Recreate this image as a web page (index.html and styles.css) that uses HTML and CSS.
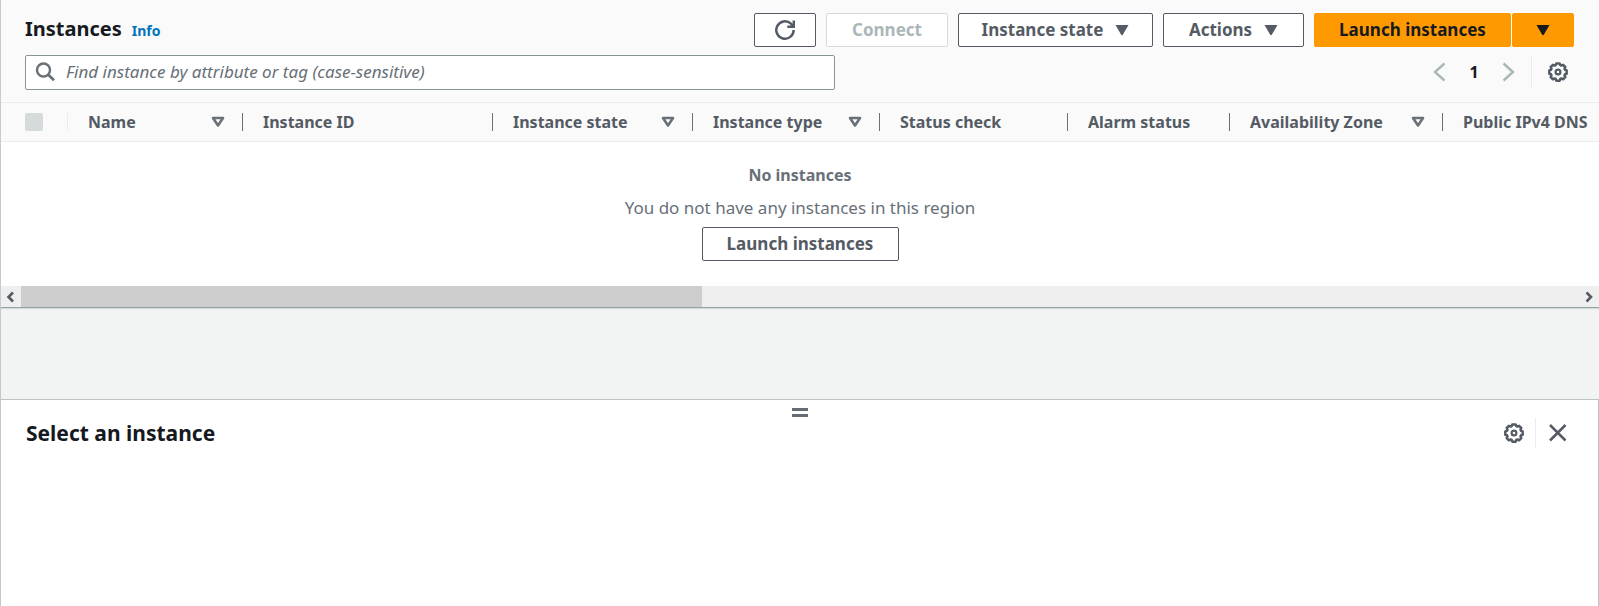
FILE: index.html
```html
<!DOCTYPE html>
<html lang="en">
<head>
<meta charset="utf-8">
<title>Instances</title>
<link rel="stylesheet" href="styles.css">
</head>
<body>
<svg class="sprite" aria-hidden="true">
  <symbol id="gear" viewBox="0 0 20 20">
    <path d="M8.300 1.400h3.400l.6 1.700 1.100.5 1.700-.8 2.200 2.200-.8 1.700.5 1.100 1.700.6v3.300l-1.700.6-.5 1.100.8 1.700-2.200 2.200-1.700-.8-1.100.5-.6 1.700H8.300l-.6-1.700-1.100-.5-1.700.8-2.200-2.200.8-1.700-.5-1.100-1.700-.6V8.400l1.700-.6.5-1.100-.8-1.700 2.200-2.200 1.700.8 1.100-.5z" stroke-width="2.500" stroke-linejoin="round"/>
    <circle cx="10" cy="10" r="2.400" stroke-width="2.200"/>
  </symbol>
  <symbol id="sort" viewBox="0 0 14 12"><path d="M2 2h10L7 9.500z" stroke-width="2.600" stroke-linejoin="round"/></symbol>
  <symbol id="caret" viewBox="0 0 14 12"><path class="fill" d="M.5 1h13L7.800 10.700q-.8.900-1.600 0z"/></symbol>
</svg>
<main class="page">
  <section class="instances">
    <header class="toolbar">
      <div class="row">
        <div class="heading">
          <h1>Instances</h1>
          <a class="info" href="#info">Info</a>
        </div>
        <div class="actions">
          <button class="btn icon-btn" type="button" aria-label="Refresh"><svg class="icon" viewBox="0 0 20 20"><path d="M18.700 10a8.700 8.700 0 1 1-2.800-6.400L18 6" stroke-width="2.500"/><path d="M18.800.5v6.300h-6.500" stroke-width="2.500"/></svg></button>
          <button class="btn connect" type="button" disabled>Connect</button>
          <button class="btn state" type="button">Instance state <svg class="caret"><use href="#caret"/></svg></button>
          <button class="btn menu" type="button">Actions <svg class="caret"><use href="#caret"/></svg></button>
          <div class="split">
            <button class="btn primary launch" type="button">Launch instances</button>
            <button class="btn primary icon-btn" type="button" aria-label="More launch options"><svg class="caret"><use href="#caret"/></svg></button>
          </div>
        </div>
      </div>
      <div class="row">
        <label class="search">
          <svg class="icon" viewBox="0 0 20 20"><circle cx="8.500" cy="8" r="6.500" stroke-width="2.400"/><path d="M13 12.500l6 5.700" stroke-width="2.800"/></svg>
          <input type="text" aria-label="Find instance" placeholder="Find instance by attribute or tag (case-sensitive)">
        </label>
        <div class="pager">
          <button class="plain" type="button" aria-label="Previous page" disabled><svg class="icon" viewBox="0 0 20 20"><path d="M14.500 1.500L5 10l9.500 8.500" stroke-width="2.400"/></svg></button>
          <span class="current">1</span>
          <button class="plain" type="button" aria-label="Next page" disabled><svg class="icon" viewBox="0 0 20 20"><path d="M5.500 1.500L15 10l-9.500 8.500" stroke-width="2.400"/></svg></button>
          <button class="plain settings" type="button" aria-label="Preferences"><svg class="icon"><use href="#gear"/></svg></button>
        </div>
      </div>
    </header>
    <div class="table-wrap">
      <table>
        <colgroup><col class="c-check"><col class="c-name"><col class="c-id"><col class="c-state"><col class="c-type"><col class="c-status"><col class="c-alarm"><col class="c-zone"><col></colgroup>
        <thead>
          <tr>
            <th class="check"><div class="cell"><input type="checkbox" aria-label="Select all" disabled></div></th>
            <th><div class="cell">Name <svg class="sort"><use href="#sort"/></svg></div></th>
            <th><div class="cell">Instance ID</div></th>
            <th><div class="cell">Instance state <svg class="sort"><use href="#sort"/></svg></div></th>
            <th><div class="cell">Instance type <svg class="sort"><use href="#sort"/></svg></div></th>
            <th><div class="cell">Status check</div></th>
            <th><div class="cell">Alarm status</div></th>
            <th><div class="cell">Availability Zone <svg class="sort"><use href="#sort"/></svg></div></th>
            <th><div class="cell">Public IPv4 DNS</div></th>
          </tr>
        </thead>
        <tbody>
          <tr>
            <td colspan="9">
              <div class="empty">
                <strong>No instances</strong>
                <p>You do not have any instances in this region</p>
                <button class="btn launch" type="button">Launch instances</button>
              </div>
            </td>
          </tr>
        </tbody>
      </table>
    </div>
    <div class="scrollbar">
      <button class="plain step" type="button" aria-label="Scroll left"><svg viewBox="0 0 10 12"><path d="M7 1.500L2.500 6 7 10.500" stroke-width="2.600"/></svg></button>
      <div class="track"><div class="thumb"></div></div>
      <button class="plain step" type="button" aria-label="Scroll right"><svg viewBox="0 0 10 12"><path d="M2.500 1.500L7 6l-4.500 4.500" stroke-width="2.600"/></svg></button>
    </div>
  </section>
  <section class="details">
    <div class="handle"><span></span></div>
    <div class="details-head">
      <h2>Select an instance</h2>
      <div class="tools">
        <button class="plain" type="button" aria-label="Panel preferences"><svg class="icon"><use href="#gear"/></svg></button>
        <button class="plain close" type="button" aria-label="Close panel"><svg class="icon" viewBox="0 0 20 20"><path d="M2 2l15.500 15.500M17.500 2L2 17.500" stroke-width="2.500"/></svg></button>
      </div>
    </div>
  </section>
</main>
</body>
</html>
```
FILE: styles.css
```css
* { box-sizing: border-box; }
body {
  margin: 0;
  background: #f2f4f4;
  color: #16191f;
  font: 16px/22px "Noto Sans", "Open Sans", sans-serif;
}
h1, h2, p { margin: 0; }
button, input { font: inherit; }
svg { fill: none; stroke: currentColor; flex: none; display: block; }
.sprite { display: none; }
.fill { fill: currentColor; stroke: none; }
.icon { width: 20px; height: 20px; }
.caret, .sort { width: 14px; height: 12px; }
.page { min-height: 100vh; display: flex; flex-direction: column; border-left: 1px solid #c0c9cf; }

.instances { background: #fff; border-bottom: 1px solid #95a1a5; box-shadow: 0 1px 1px #d5dbdb; margin-bottom: 91px; }
.toolbar { background: #fafafa; padding: 13px 25px 12px 24px; display: grid; gap: 8px; }
.row { display: flex; justify-content: space-between; }
.heading { display: flex; align-items: baseline; gap: 10px; }
h1, h2 { font-size: 21px; line-height: 32px; font-weight: 700; }
h1 { font-size: 20px; }
.info { font-size: 14px; font-weight: 700; color: #0073bb; text-decoration: none; }
.actions { display: flex; gap: 10px; }
.split { display: flex; gap: 1px; }
.btn {
  height: 34px;
  padding: 0 20px;
  border: 1px solid #545b64;
  border-radius: 2px;
  background: #fff;
  color: #545b64;
  font-size: 17px;
  font-weight: 700;
  display: flex;
  align-items: center;
  justify-content: center;
  gap: 12px;
  white-space: nowrap;
}
.btn:disabled { border-color: #d5dbdb; color: #aab7b8; }
.icon-btn { width: 62px; }
.connect { min-width: 122px; }
.state { min-width: 195px; }
.menu { min-width: 141px; }
.launch { min-width: 197px; }
.primary { background: #f90; border-color: #f90; color: #16191f; }

.search {
  width: 810px;
  max-width: 60%;
  height: 35px;
  padding: 0 9px 2px;
  border: 1px solid #879596;
  border-radius: 2px;
  background: #fff;
  color: #687078;
  display: flex;
  align-items: center;
  gap: 11px;
}
.search input { flex: 1; min-width: 0; border: 0; padding: 0; outline: 0; background: none; color: #16191f; font-size: 17px; }
.search input::placeholder { color: #687078; font-style: italic; opacity: 1; }
.plain { border: 0; padding: 0; background: none; color: #545b64; display: flex; align-items: center; justify-content: center; }
.plain:disabled { color: #aab7b8; }
.pager { height: 34px; display: flex; align-items: center; padding-right: 6px; }
.current { width: 48px; text-align: center; font-weight: 700; }
.settings { height: 34px; margin-left: 13px; padding-left: 16px; border-left: 1px solid #eaeded; }

.table-wrap { overflow: hidden; }
table { width: 100%; table-layout: fixed; border-collapse: collapse; }
thead { background: #fafafa; border: solid #eaeded; border-width: 1px 0; }
th, td { padding: 0; }
th { height: 39px; text-align: left; color: #545b64; white-space: nowrap; }
.cell { height: 18px; padding: 0 17px 0 20px; display: flex; align-items: center; justify-content: space-between; border-right: 1px solid #687078; }
.check .cell { padding: 0 24px; border-color: #eaeded; }
th:last-child .cell { border: 0; padding-right: 0; }
.check input { appearance: none; width: 18px; height: 18px; margin: 0; flex: none; border-radius: 2px; background: #d5dbdb; }
.sort { color: #687078; }
.c-check { width: 67px; }
.c-name { width: 175px; }
.c-id { width: 250px; }
.c-state { width: 200px; }
.c-type { width: 187px; }
.c-status { width: 188px; }
.c-alarm { width: 162px; }
.c-zone { width: 213px; }
.empty { padding: 22px 0 25px; display: flex; flex-direction: column; align-items: center; color: #687078; }
.empty p { margin: 11px 0 8px; font-size: 17px; }

.scrollbar { display: flex; height: 21px; background: #efefef; }
.step { width: 20px; }
.step svg { width: 10px; height: 12px; }
.track { flex: 1; }
.thumb { width: 43.7%; height: 100%; background: #cdcdcd; }

.details { flex: 1; min-height: 206px; background: #fff; border: 1px solid #bcc4c6; border-width: 1px 1px 0 0; }
.handle { display: flex; justify-content: center; padding-top: 8px; }
.handle span { width: 16px; height: 9px; border: solid #666d75; border-width: 3px 0; }
.details-head { display: flex; justify-content: space-between; align-items: center; padding: 0 30px 0 25px; }
.tools { display: flex; align-items: center; }
.close { height: 30px; margin-left: 11px; padding-left: 12px; border-left: 1px solid #eaeded; }
```
